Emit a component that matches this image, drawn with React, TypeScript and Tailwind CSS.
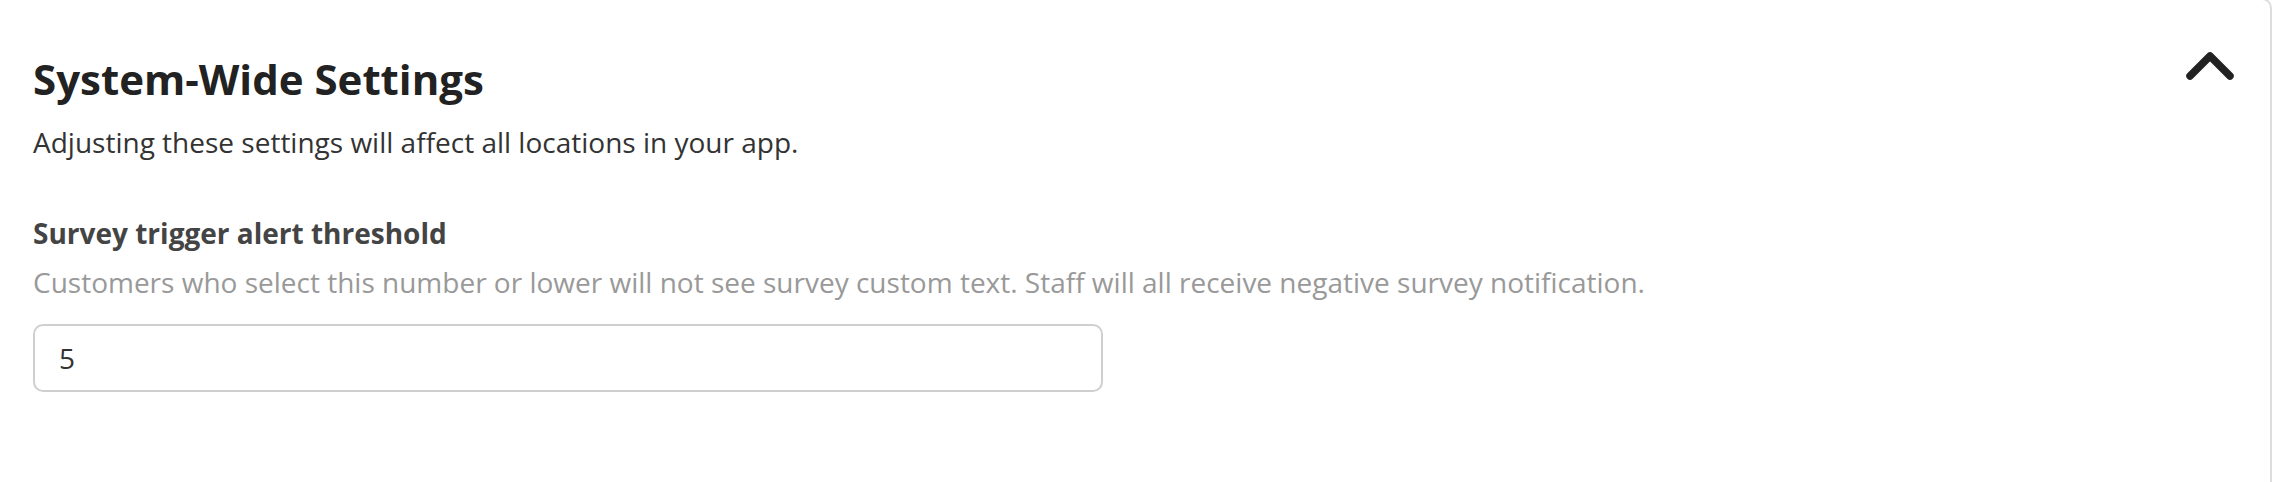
import { useState } from 'react'

function ChevronUp() {
  return (
    <svg width="48" height="29" viewBox="0 0 48 29" fill="none" className="-mt-[4px] shrink-0">
      <path
        d="M4 25 L24 5 L44 25"
        stroke="#222222"
        strokeWidth="7.5"
        strokeLinecap="round"
        strokeLinejoin="round"
      />
    </svg>
  )
}

export default function App() {
  const [threshold, setThreshold] = useState('5')
  const [open, setOpen] = useState(true)

  return (
    <div className="w-full h-[482px] bg-white overflow-hidden" style={{ fontFamily: '"Open Sans", "Noto Sans", sans-serif' }}>
      <div className="-mt-[2px] mr-[4px] h-[490px] border-t-2 border-r-2 border-[#dcdcdc] rounded-tr-[10px] pl-[33px] pr-[36px] pt-[55px]">
        <div className="flex items-start justify-between">
          <h2 className="text-[42px] leading-[48px] font-bold text-[#222222]">System-Wide Settings</h2>
          <button onClick={() => setOpen((o) => !o)} className="cursor-pointer">
            <ChevronUp />
          </button>
        </div>
        <p className="mt-[19px] text-[28px] leading-[40px] text-[#333333]">
          Adjusting these settings will affect all locations in your app.
        </p>

        {open && (
          <div>
            <label className="block mt-[51px] text-[28px] leading-[40px] font-bold text-[#444444]">
              Survey trigger alert threshold
            </label>
            <p className="mt-[9px] text-[28px] leading-[40px] text-[#999999]">
              Customers who select this number or lower will not see survey custom text. Staff will all receive negative survey notification.
            </p>
            <input
              value={threshold}
              onChange={(e) => setThreshold(e.target.value)}
              className="mt-[22px] block w-[1070px] h-[68px] border-2 border-[#cfcfcf] rounded-[10px] pl-[24px] text-[28px] text-[#333333] outline-none"
            />
          </div>
        )}
      </div>
    </div>
  )
}
